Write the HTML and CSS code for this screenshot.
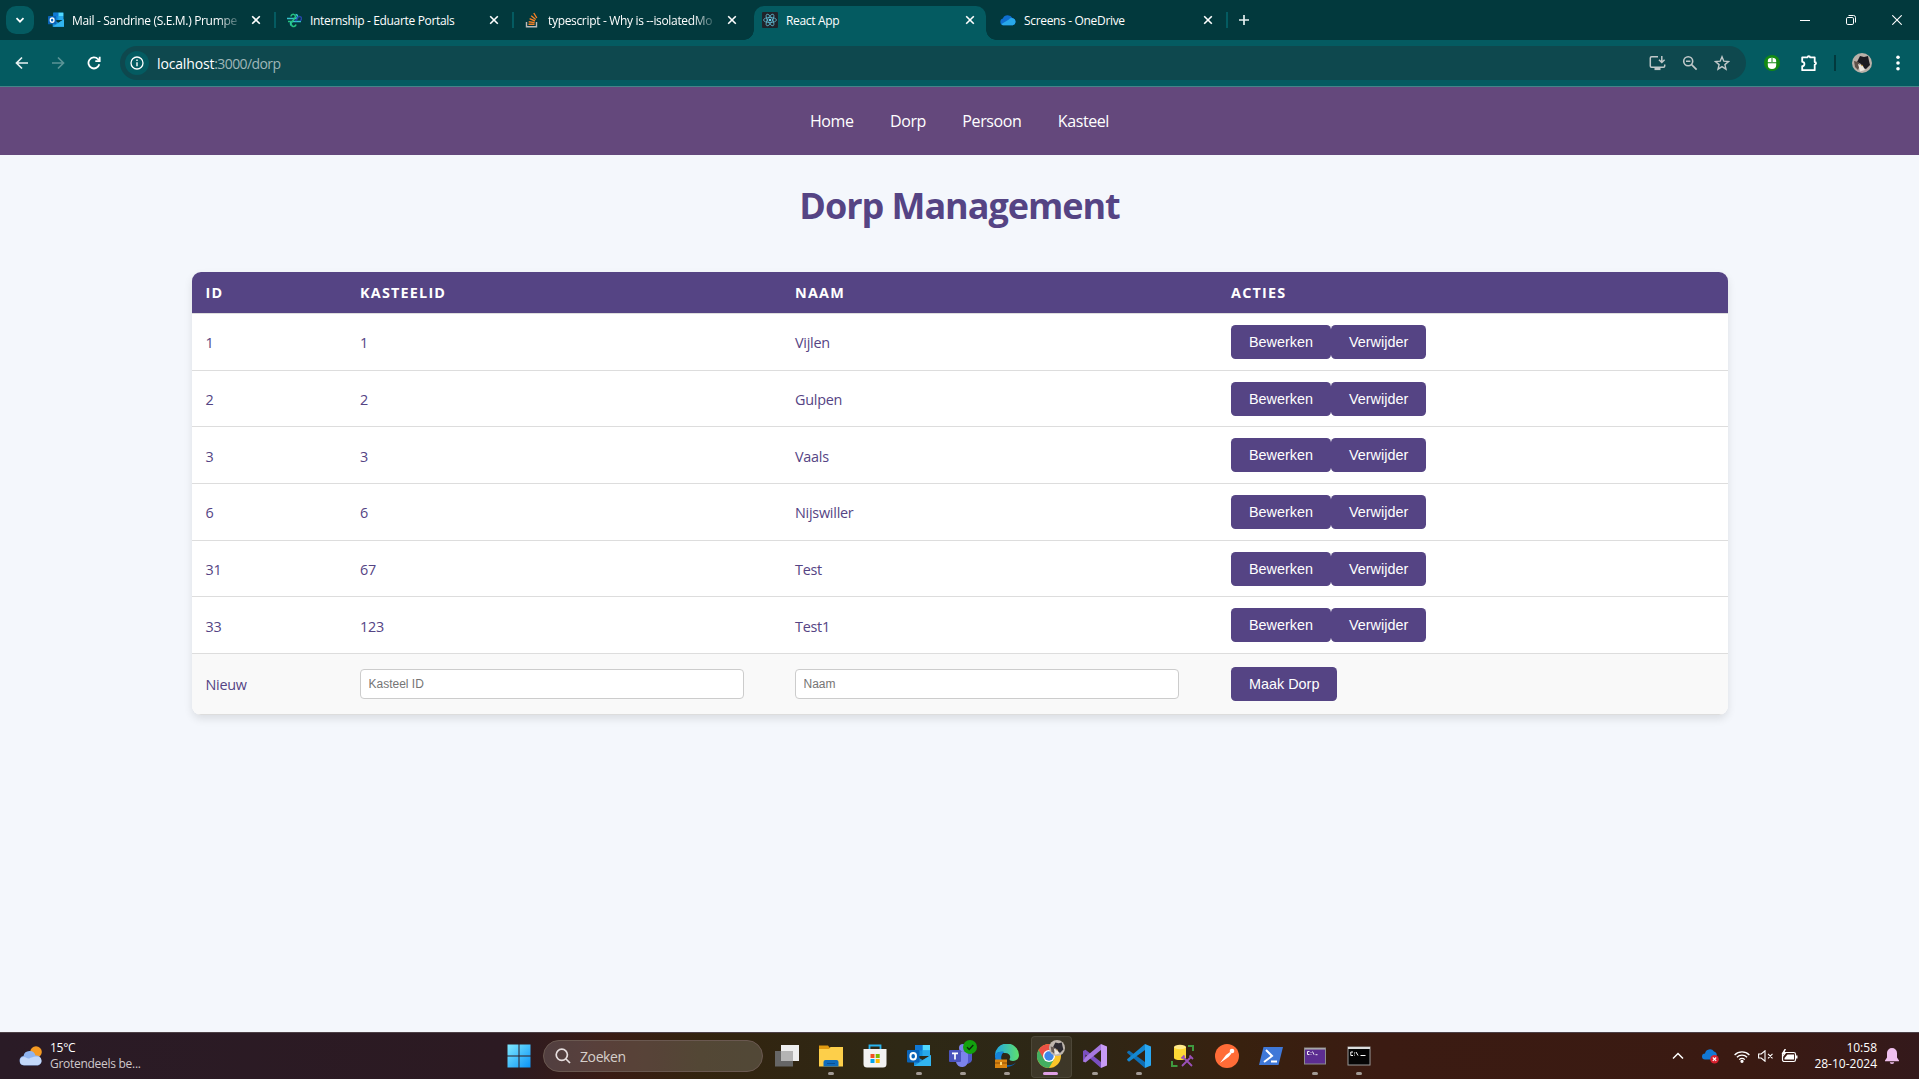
FILE: index.html
```html
<!DOCTYPE html>
<html lang="nl">
<head>
<meta charset="utf-8">
<title>React App</title>
<link rel="stylesheet" href="styles.css">
</head>
<body>
<svg class="defs" width="0" height="0" aria-hidden="true">
  <defs>
    <symbol id="x" viewBox="0 0 10 10"><path d="M1.200 1.200l7.600 7.600M8.800 1.200L1.200 8.800" fill="none" stroke="currentColor" stroke-width="1.600"/></symbol>
    <symbol id="outlook" viewBox="0 0 24 24"><path d="M8 1h15v11H8z" fill="#1490df"/><path d="M15.500 1H23v5.500h-7.500z" fill="#50d9ff"/><path d="M8 1h7.500v5.500H8z" fill="#0f78d4"/><path d="M15.500 6.500H23V12h-7.500z" fill="#28a8ea"/><path d="M7 11l8.500 5L24 11v11H7z" fill="#1a8fdc"/><path d="M7 22l17-11v11z" fill="#32b5f0"/><rect x="0" y="6" width="12.500" height="12.500" rx="1" fill="#0a64b8"/><ellipse cx="6.200" cy="12.200" rx="2.800" ry="3.200" fill="none" stroke="#fff" stroke-width="2"/></symbol>
    <symbol id="cloud" viewBox="0 0 18 14"><path d="M4 13a4 4 0 0 1-.8-7.800A6 6 0 0 1 14 4.800 4.200 4.200 0 0 1 14.300 13z" fill="#0f6fd0"/><path d="M3 13a3.600 3.600 0 0 1-1.300-1.500L10 6.300a4 4 0 0 1 4.500-1.200 4.100 4.100 0 0 1 0 7.900z" fill="#28a8ea"/></symbol>
    <symbol id="cat" viewBox="0 0 20 20"><circle cx="10" cy="10" r="10" fill="#b9b0a8"/><path d="M6 7l2-4 4 1 4-1 1 5 1 4-4 4-3-1-2-4-4-2z" fill="#1c1a20"/><path d="M2 8l4 1 2 3-2 5-3-3z" fill="#5d5048"/><path d="M6 11l5 2 2 4-5 1.500z" fill="#ece6df"/><circle cx="10" cy="12.500" r=".8" fill="#c79a3a"/></symbol>
  </defs>
</svg>

<header class="browser">
  <div class="tabstrip">
    <div class="tab-search"><svg width="10" height="10" viewBox="0 0 10 10"><path d="M1.500 3.200L5 6.700l3.500-3.500" fill="none" stroke="#fff" stroke-width="1.700"/></svg></div>
    <div class="tab">
      <svg class="favicon" viewBox="0 0 24 24"><use href="#outlook"/></svg>
      <span class="tab-title fade">Mail - Sandrine (S.E.M.) Prumpe</span>
      <svg class="close"><use href="#x"/></svg>
    </div>
    <div class="tab">
      <svg class="favicon" viewBox="0 0 16 16" fill="none" stroke-width="1.500"><path d="M1 6.500h8.500a2 2 0 0 0 0-4M15 9.500H6.500a2 2 0 0 0 0 4" stroke="#35c5cf"/><path d="M5 4.500a2.200 2.200 0 1 1 3.500 1.800L6 10a2.500 2.500 0 1 0 4 2.500" stroke="#26c281"/><path d="M9.500 9l2-2.500a2 2 0 1 1 2.500 2" stroke="#2446a8"/><path d="M2 9.500h4" stroke="#26c281"/></svg>
      <span class="tab-title">Internship - Eduarte Portals</span>
      <svg class="close"><use href="#x"/></svg>
    </div>
    <div class="tab no-sep">
      <svg class="favicon" viewBox="0 0 16 16" fill="none" stroke-width="1.400"><path d="M2.500 10v4.800h10V10" stroke="#bcbbbb"/><path d="M4.500 12.300h6M4.700 9.700l5.900.9M5.600 6.700l5.400 2.300M7.200 3.800l4.500 3.700M9.800 1l3 5" stroke="#f48024"/></svg>
      <span class="tab-title fade">typescript - Why is --isolatedMo</span>
      <svg class="close"><use href="#x"/></svg>
    </div>
    <div class="tab active">
      <svg class="favicon" viewBox="0 0 16 16"><rect width="16" height="16" rx="1" fill="#20232a"/><g fill="none" stroke="#61b8cf" stroke-width=".8"><ellipse cx="8" cy="8" rx="6.500" ry="2.500"/><ellipse cx="8" cy="8" rx="6.500" ry="2.500" transform="rotate(60 8 8)"/><ellipse cx="8" cy="8" rx="6.500" ry="2.500" transform="rotate(120 8 8)"/></g><circle cx="8" cy="8" r="1.300" fill="#61dafb"/></svg>
      <span class="tab-title">React App</span>
      <svg class="close"><use href="#x"/></svg>
    </div>
    <div class="tab">
      <svg class="favicon" viewBox="0 0 18 14"><use href="#cloud"/></svg>
      <span class="tab-title">Screens - OneDrive</span>
      <svg class="close"><use href="#x"/></svg>
    </div>
    <svg class="new-tab" width="12" height="12" viewBox="0 0 12 12"><path d="M6 1v10M1 6h10" stroke="#e6f0f0" stroke-width="1.700"/></svg>
    <div class="win-controls">
      <svg width="10" height="10" viewBox="0 0 10 10"><path d="M0 5.500h10" stroke="#fff"/></svg>
      <svg width="10" height="10" viewBox="0 0 10 10" fill="none" stroke="#fff"><rect x=".5" y="2.500" width="7" height="7" rx="1.300"/><path d="M2.500.5h5a2 2 0 0 1 2 2v5"/></svg>
      <svg width="10" height="10" viewBox="0 0 10 10"><path d="M.3.300l9.400 9.400M9.700.3L.3 9.700" stroke="#fff" stroke-width="1.100"/></svg>
    </div>
  </div>
  <div class="toolbar">
    <div class="nav-icons">
      <svg width="14" height="14" viewBox="0 0 14 14" fill="none" stroke="#e8f2f2" stroke-width="1.700"><path d="M13 7H1.800M7 1.500L1.500 7 7 12.500"/></svg>
      <svg width="14" height="14" viewBox="0 0 14 14" fill="none" stroke="#5b9497" stroke-width="1.700"><path d="M1 7h11.200M7 1.500L12.500 7 7 12.500"/></svg>
      <svg width="14" height="14" viewBox="0 0 14 14" fill="none" stroke="#fff" stroke-width="1.800"><path d="M12.300 8.300A5.500 5.500 0 1 1 11 3.200l1 1.200"/><path d="M12.700.8v4.400H8.300"/></svg>
    </div>
    <div class="omnibox">
      <span class="info"><svg width="16" height="16" viewBox="0 0 16 16"><circle cx="8" cy="8" r="6" fill="none" stroke="#fff" stroke-width="1.300"/><path d="M8 7.200v4M8 4.500v1.500" stroke="#fff" stroke-width="1.400"/></svg></span>
      <span class="url"><span class="host">localhost</span><span class="path">:3000/dorp</span></span>
      <div class="omni-icons">
        <svg width="17" height="16" viewBox="0 0 17 16" fill="none" stroke="#c0c8c9" stroke-width="1.500"><path d="M9 1.800H2.500a1.200 1.200 0 0 0-1.200 1.200v8a1.200 1.200 0 0 0 1.200 1.200h12a1.200 1.200 0 0 0 1.200-1.200V9.500"/><path d="M5.500 14h6" stroke-width="2.200"/><path d="M12.800 1v6M10 4.800l2.800 2.700 2.800-2.700"/></svg>
        <svg width="16" height="16" viewBox="0 0 16 16" fill="none" stroke="#c0c8c9" stroke-width="1.600"><circle cx="6.200" cy="6.200" r="4.500"/><path d="M9.600 9.600l5 5M4 6.200h4.400"/></svg>
        <svg width="16" height="16" viewBox="0 0 16 16" fill="none" stroke="#c0c8c9" stroke-width="1.400"><path d="M8 1.800l1.800 4.400 4.700.4-3.600 3 1.100 4.600L8 11.700l-4 2.500 1.100-4.600-3.600-3 4.700-.4z"/></svg>
      </div>
    </div>
    <div class="ext-icons">
      <svg width="16" height="16" viewBox="0 0 16 16"><circle cx="8" cy="8" r="8" fill="#138a13"/><path d="M3.800 7.300V6a4 3 0 0 1 8.400 0v1.300zM3.800 8.300h8.400V10a4.200 4 0 0 1-8.400 0z" fill="#fff"/><path d="M8 3v4" stroke="#138a13"/></svg>
      <svg width="18" height="18" viewBox="0 0 18 18" fill="none" stroke="#fff" stroke-width="1.800" stroke-linejoin="round"><path d="M2.200 3.300h5.400a1.200 1.200 0 0 1 2.400 0h4.700v4.700a1.200 1.200 0 0 1 0 2.600v5.600H2.200v-4a2.200 2.200 0 0 0 0-4.400z"/></svg>
      <span class="bar-sep"></span>
      <svg width="20" height="20"><use href="#cat"/></svg>
      <svg width="4" height="16" viewBox="0 0 4 16" fill="#fff"><circle cx="2" cy="2.200" r="1.800"/><circle cx="2" cy="8" r="1.800"/><circle cx="2" cy="13.800" r="1.800"/></svg>
    </div>
  </div>
</header>

<main class="page">
  <nav class="site-nav">
    <a>Home</a><a>Dorp</a><a>Persoon</a><a>Kasteel</a>
  </nav>
  <h1>Dorp Management</h1>
  <div class="table">
    <div class="row head"><div>ID</div><div>KASTEELID</div><div>NAAM</div><div>ACTIES</div></div>
    <div class="row"><div>1</div><div>1</div><div>Vijlen</div><div class="actions"><button>Bewerken</button><button>Verwijder</button></div></div>
    <div class="row"><div>2</div><div>2</div><div>Gulpen</div><div class="actions"><button>Bewerken</button><button>Verwijder</button></div></div>
    <div class="row"><div>3</div><div>3</div><div>Vaals</div><div class="actions"><button>Bewerken</button><button>Verwijder</button></div></div>
    <div class="row"><div>6</div><div>6</div><div>Nijswiller</div><div class="actions"><button>Bewerken</button><button>Verwijder</button></div></div>
    <div class="row"><div>31</div><div>67</div><div>Test</div><div class="actions"><button>Bewerken</button><button>Verwijder</button></div></div>
    <div class="row"><div>33</div><div>123</div><div>Test1</div><div class="actions"><button>Bewerken</button><button>Verwijder</button></div></div>
    <div class="row new"><div>Nieuw</div><div class="field"><input placeholder="Kasteel ID"></div><div class="field"><input placeholder="Naam"></div><div class="field"><button>Maak Dorp</button></div></div>
  </div>
</main>

<footer class="taskbar">
  <div class="weather">
    <svg width="24" height="20" viewBox="0 0 24 20"><circle cx="17" cy="6" r="5.800" fill="#f59a23"/><path d="M5 19.500a4.800 4.800 0 0 1-.5-9.500A6.200 6.200 0 0 1 16.500 9.500 5.200 5.200 0 0 1 19 19.500z" fill="#8fb4f0"/><path d="M5 19a4 4 0 0 1 0-8c2 0 3 1.500 4.500 1.500S13 10.500 18 10.500a4.200 4.200 0 0 1 .5 8.500z" fill="#c3d8fa"/></svg>
    <div class="weather-text"><span>15°C</span><span class="dim">Grotendeels be...</span></div>
  </div>
  <div class="apps">
    <div class="app"><svg width="24" height="24" viewBox="0 0 24 24"><defs><linearGradient id="w" x2="1" y2="1"><stop stop-color="#7fe9ff"/><stop offset="1" stop-color="#0a93f8"/></linearGradient></defs><path d="M.5.500h11v11H.5zM12.500.500h11v11h-11zM.5 12.500h11v11H.5zM12.500 12.500h11v11h-11z" fill="url(#w)"/></svg></div>
    <div class="search"><svg width="16" height="16" viewBox="0 0 16 16" fill="none" stroke="#e6dede" stroke-width="1.700"><circle cx="6.800" cy="6.800" r="5.600"/><path d="M11 11l4 4"/></svg><span>Zoeken</span></div>
    <div class="app"><svg width="24" height="24" viewBox="0 0 24 24"><path d="M6 1h18v16H6z" fill="#eee"/><path d="M0 7h18v15.500H0z" fill="#666"/><path d="M6 7h12v10H6z" fill="#b4b4b4"/></svg></div>
    <div class="app run"><svg width="24" height="24" viewBox="0 0 24 24"><path d="M0 1.500h9l2 2.500v4H0z" fill="#e09a10"/><path d="M0 5h10l1.500-2H24v19.500H0z" fill="#fdcf4a"/><path d="M4.500 22.500V18a2 2 0 0 1 2-2h11a2 2 0 0 1 2 2v4.500z" fill="#0f6cbd"/><path d="M8 19.500h8" stroke="#0a4f93"/></svg></div>
    <div class="app"><svg width="24" height="24" viewBox="0 0 24 24"><path d="M6.500 6V1.500h11V6" fill="none" stroke="#28b4f0" stroke-width="1.800"/><path d="M.5 5h23v15a3.500 3.500 0 0 1-3.500 3.500H4A3.500 3.500 0 0 1 .5 20z" fill="#f2f2f2"/><path d="M7.500 10h4v4h-4z" fill="#f25022"/><path d="M12.700 10h4v4h-4z" fill="#7fba00"/><path d="M7.500 15h4v4h-4z" fill="#00a4ef"/><path d="M12.700 15h4v4h-4z" fill="#ffb900"/></svg></div>
    <div class="app run"><svg width="24" height="24"><use href="#outlook"/></svg></div>
    <div class="app run"><svg class="badged" width="28" height="28" viewBox="0 0 28 28"><circle cx="14" cy="8" r="4" fill="#7b83eb"/><path d="M15 12h8v8a4.500 4.500 0 0 1-8 2z" fill="#5059c9"/><path d="M7 12h12v8a6 6 0 0 1-12 2z" fill="#7b83eb"/><rect x="0" y="10" width="12" height="12" rx="1" fill="#4b53bc"/><path d="M3 13.300h6M6 13.300v6.200" stroke="#fff" stroke-width="1.700"/><circle cx="21" cy="7" r="7" fill="#13a10e"/><path d="M18 7.200l2.200 2.200L24.300 5" fill="none" stroke="#0b2a0b" stroke-width="1.400"/></svg></div>
    <div class="app run"><svg width="24" height="24" viewBox="0 0 24 24"><defs><linearGradient id="e" x2="1"><stop stop-color="#1fa6e8"/><stop offset="1" stop-color="#5fe06a"/></linearGradient></defs><path d="M0 12A12 12 0 0 1 24 11c0 4-3 6-6 6-3.500 0-4-1.500-3-3 1-2-1-5-5-5-5 0-9 2-10 5z" fill="url(#e)"/><path d="M0 12c1-3.500 5-5 9-4-3 2-4 8 0 11.500 3 2.500 9 2 12-1A12 12 0 0 1 0 13z" fill="#0c59a4"/><path d="M0 12c1-3.500 5-5 9-4-3 2-4 6-2 9l-6 1z" fill="#1683d8"/><rect x="0" y="15.500" width="12" height="8.500" fill="#d98410"/><path d="M0 19h12" stroke="#8a4d06"/><rect x="5" y="18" width="2" height="3" fill="#ffd873"/></svg></div>
    <div class="app run current"><svg class="badged" width="28" height="28" viewBox="0 0 28 28"><circle cx="12" cy="16" r="12" fill="#fbc116"/><path d="M1.600 10a12 12 0 0 0 10.400 18l5.200-9z" fill="#34a853"/><path d="M12 10h10.400A12 12 0 0 0 1.600 10l5.200 9z" fill="#ea4335"/><circle cx="12" cy="16" r="6" fill="#fff"/><circle cx="12" cy="16" r="4.700" fill="#2f7de9"/><svg x="12" y="0" width="16" height="16"><use href="#cat"/></svg></svg></div>
    <div class="app run"><svg width="24" height="24" viewBox="0 0 24 24"><path d="M0 7l2.500-1.200L18 18v6L2.500 10.500v6L0 17.500z" fill="#7a4fc0"/><path d="M0 17.500l2.500 1L18 6V0L2.500 13z" fill="#a678e0"/><path d="M18 0l6 2.500v19L18 24z" fill="#c79bf5"/></svg></div>
    <div class="app run"><svg width="24" height="24" viewBox="0 0 24 24"><path d="M0 8l2-1.500L18 18v6L.3 9z" fill="#0f6fb5"/><path d="M0 16l2 1.700L18 6V0L.3 15z" fill="#1487d1"/><path d="M18 0l6 2.500v19L18 24z" fill="#2aa8f2"/></svg></div>
    <div class="app"><svg width="24" height="24" viewBox="0 0 24 24"><path d="M3 3v11a6 2 0 0 0 12 0V3z" fill="#fdd835"/><ellipse cx="9" cy="3" rx="6" ry="2.200" fill="#ffe98a"/><path d="M17 2h5v5M1 17v5h5.500" fill="none" stroke="#3f9a3f" stroke-width="2"/><path d="M11 22l9-9M12 13l9 9M10.500 14.500l3-3M18.500 11.500l3.500 3.500" stroke="#9a50b8" stroke-width="1.800"/></svg></div>
    <div class="app"><svg width="24" height="24" viewBox="0 0 24 24"><circle cx="12" cy="12" r="12" fill="#ff6c37"/><path d="M5 19l6-8 4-3 1.500 1.500-3 3.500z" fill="#fff"/><circle cx="17" cy="7" r="2.300" fill="#fff"/></svg></div>
    <div class="app"><svg width="24" height="24" viewBox="0 0 24 24"><path d="M4.500 3H24l-4.500 18H0z" fill="#3f78d8"/><path d="M7 6l6 6-8 6M12 17.500h6" fill="none" stroke="#fff" stroke-width="2"/></svg></div>
    <div class="app run"><svg width="24" height="24" viewBox="0 0 24 24"><rect x="1.500" y="4" width="21" height="16" fill="#5c2d91" stroke="#8c8c8c"/><path d="M2 4.800h20" stroke="#aaa" stroke-width="1.500"/><path d="M6.500 7.500h-2v3h2M8 8v.8M8 10v.7M9.500 7.500l1.500 3.200M12.500 10.700h2" fill="none" stroke="#fff" stroke-width=".9"/></svg></div>
    <div class="app run"><svg width="24" height="24" viewBox="0 0 24 24"><rect x="1" y="3" width="22" height="18" fill="#050505" stroke="#9a9a9a"/><path d="M1 4h22" stroke="#ddd" stroke-width="2"/><path d="M6 8H3.800v3.500H6M7.500 8.500v1M7.500 10.700v.8M9 8l2 3.500M13.500 11.500h5" fill="none" stroke="#fff"/></svg></div>
  </div>
  <div class="tray">
    <svg width="12" height="12" viewBox="0 0 12 12"><path d="M1 8.500l5-5 5 5" fill="none" stroke="#fff" stroke-width="1.500"/></svg>
    <svg class="t-cloud" width="18" height="16" viewBox="0 0 18 16"><path d="M3 11.500a3 3 0 0 1 0-6A5 5 0 0 1 12 3.500a4 4 0 0 1 2.500 5l-2 3z" fill="#1278d4"/><circle cx="12.500" cy="11.200" r="4.300" fill="#d6202e"/><path d="M10.800 9.500l3.400 3.400M14.200 9.500l-3.400 3.400" stroke="#fff" stroke-width="1.100"/></svg>
    <svg class="t-wifi" width="16" height="13" viewBox="0 0 16 13" fill="none" stroke="#fff" stroke-width="1.300"><path d="M.6 5a10.500 10.500 0 0 1 14.800 0M2.900 7.300a7.200 7.200 0 0 1 10.200 0M5.200 9.600a4 4 0 0 1 5.600 0"/><circle cx="8" cy="11.300" r="1" fill="#fff"/></svg>
    <svg class="t-vol" width="16" height="12" viewBox="0 0 16 12" fill="none" stroke="#fff" stroke-width="1.100"><path d="M.6 4v4h2.600L7 11.200V.8L3.200 4zM10 3.800l4.500 4.500M14.500 3.800L10 8.300"/></svg>
    <svg class="t-bat" width="17" height="14" viewBox="0 0 17 14"><rect x="1.500" y="3.500" width="13" height="9" rx="1.800" fill="none" stroke="#fff" stroke-width="1.200"/><path d="M3.500 9l3-3.500H13v5H3.500z" fill="#fff"/><path d="M15 6.500h1.500v3H15zM3.500 0L.5 5h2L1.500 8.500 5.500 3.500h-2L5 0z" fill="#fff"/></svg>
    <div class="clock"><span>10:58</span><span>28-10-2024</span></div>
    <svg class="t-bell" width="14" height="16" viewBox="0 0 14 16"><path d="M7 0a5 5 0 0 1 5 5v4.500l2 3v.7H0v-.7l2-3V5a5 5 0 0 1 5-5zM4.800 14.200h4.400a2.200 1.700 0 0 1-4.400 0z" fill="#f0c0ee"/></svg>
  </div>
</footer>
</body>
</html>
```

FILE: styles.css
```css
* { box-sizing: border-box; }
body {
  margin: 0;
  height: 1079px;
  display: flex;
  flex-direction: column;
  overflow: hidden;
  font-family: "Open Sans", "Noto Sans", sans-serif;
}
svg { display: block; flex: none; }
.defs { position: absolute; }

/* browser chrome */
.browser { color: #fff; background: #045b61; height: 87px; border-bottom: 1px solid #458488; }
.tabstrip { display: flex; height: 40px; background: #02393d; padding-left: 6px; }
.tab-search {
  width: 28px; height: 28px; margin: 6px 6px 0 0; border-radius: 10px;
  background: #045b61; display: grid; place-items: center;
}
.tab {
  position: relative; width: 238px; height: 34px; margin-top: 6px;
  display: flex; align-items: center; padding: 0 17px 6px 8px; font-size: 12px;
}
.tab::after { content: ""; position: absolute; right: 2px; top: 6px; width: 2px; height: 16px; background: #045b61; }
.tab.no-sep::after { display: none; }
.favicon { width: 16px; height: 16px; }
.tab-title { margin-left: 8px; padding-top: 1px; white-space: nowrap; line-height: 18px; letter-spacing: -.33px; }
.fade { mask-image: linear-gradient(90deg, #000 88%, rgba(0,0,0,.25) 100%); }
.close { width: 10px; height: 10px; margin-left: auto; }
.tab.active { width: 232px; margin-right: 6px; padding-right: 11px; background: #045b61; border-radius: 10px 10px 0 0; }
.tab.active::before, .tab.active::after {
  content: ""; position: absolute; top: auto; bottom: 0; width: 10px; height: 10px;
}
.tab.active::before { left: -10px; background: radial-gradient(circle at 0 0, #02393d 9.500px, #045b61 10px); }
.tab.active::after { right: -10px; background: radial-gradient(circle at 100% 0, #02393d 9.500px, #045b61 10px); }
.new-tab { margin: 14px 0 0 8px; }
.win-controls { display: flex; gap: 36px; margin: 15px 17px 0 auto; }

.toolbar { display: flex; align-items: center; height: 46px; padding: 0 19px 0 15px; }
.nav-icons { display: flex; gap: 22px; width: 105px; }
.omnibox { flex: none; width: 1626px; height: 34px; border-radius: 17px; background: #0e484e; display: flex; align-items: center; padding: 0 16px 0 5px; }
.info { width: 24px; height: 24px; border-radius: 50%; background: #045b61; display: grid; place-items: center; }
.url { margin-left: 8px; font-size: 14px; }
.host { letter-spacing: -.15px; }
.path { color: #9fb6b8; letter-spacing: -.6px; }
.omni-icons { display: flex; gap: 16px; margin-left: auto; }
.ext-icons { display: flex; align-items: center; margin-left: 18px; flex: 1; }
.ext-icons > :nth-child(2) { margin-left: 20px; }
.bar-sep { width: 2px; height: 16px; background: #02393d; margin: 0 16px; }
.ext-icons > :nth-child(5) { margin-left: auto; }

/* page */
.page { flex: 1; background: #f4f7fc; color: #554484; min-height: 0; }
.site-nav { height: 68px; background: #64487c; color: #fff; display: flex; justify-content: center; align-items: center; gap: 36.400px; font-size: 16px; letter-spacing: -.4px; }
h1 { margin: 26px 0 0; height: 91px; text-align: center; font-size: 36px; line-height: 49px; font-weight: 700; letter-spacing: -1.050px; }
.table { width: 1536px; margin: 0 auto; border-radius: 9px; overflow: hidden; background: #fff; box-shadow: 0 4px 8px rgba(0,0,0,.1); font-size: 14.400px; letter-spacing: -.25px; }
.row { display: grid; grid-template-columns: 154.500px 435px 436px 1fr; height: 56.670px; border-top: 1px solid #ddd; align-items: center; padding-left: 14px; }
.row > div { display: flex; padding-top: 2px; }
.row > .actions { padding-top: .6px; }
.row > .field { padding-top: 0; }
.head { height: 41px; border: 0; background: #554484; color: #fff; font-weight: 700; letter-spacing: 1.200px; }
.row.head > div { padding-top: 0; }
.new { height: 62px; background: #f9f9f9; border-bottom: 1px solid #ddd; }
button { height: 34px; border: 0; border-radius: 4.500px; padding: 0 18px; background: #554484; color: #fff; font: 14.400px "Liberation Sans", Arial, sans-serif; }
input { width: 384px; height: 30px; border: 1px solid #ccc; border-radius: 4px; padding: 0 7.500px; font: 12px "Liberation Sans", Arial, sans-serif; }
input::placeholder { color: #757575; }

/* taskbar */
.taskbar {
  height: 47px; border-top: 1px solid #4d4046; color: #fff; display: flex; font-size: 12px;
  background: linear-gradient(90deg, #2a1b26 0, #2c1a22 500px, #3a1c14 610px, #33240f 700px, #2e2815 900px, #2d2716 1060px, #38210f 1240px, #3b1b12 1380px, #3a1a12 1750px, #34191b 100%);
}
.weather { display: flex; align-items: center; width: 496.500px; padding-left: 19px; gap: 7px; letter-spacing: -.28px; }
.weather-text, .clock { display: flex; flex-direction: column; line-height: 16px; }
.dim { color: #cfc8cb; }
.apps { display: flex; align-items: center; }
.app { position: relative; width: 44px; height: 46px; display: grid; place-items: center; }
.badged { margin-top: -4px; }
.search { width: 220px; height: 32px; margin: 0 2px 0 2.500px; border: 1px solid #6a5850; border-radius: 16px; background: rgba(255,255,255,.16); display: flex; align-items: center; gap: 9px; padding-left: 11px; font-size: 14px; letter-spacing: -.4px; color: #d6cfcb; }
.run::after { content: ""; position: absolute; bottom: 4px; left: 19px; width: 6px; height: 3px; border-radius: 2px; background: #a29a94; }
.current::before { content: ""; position: absolute; left: 2px; top: 3px; width: 39px; height: 40px; border-radius: 4px; background: rgba(255,255,255,.08); border: 1px solid rgba(255,255,255,.08); }
.current::after { left: 14px; width: 15px; background: #e0a0e6; }
.tray { display: flex; align-items: center; margin-left: auto; padding-right: 20px; }
.t-cloud { margin-left: 18px; }
.t-wifi { margin-left: 14px; }
.t-vol { margin-left: 8px; }
.t-bat { margin-left: 7px; }
.clock { text-align: right; width: 79px; }
.t-bell { margin-left: 8px; }
```
